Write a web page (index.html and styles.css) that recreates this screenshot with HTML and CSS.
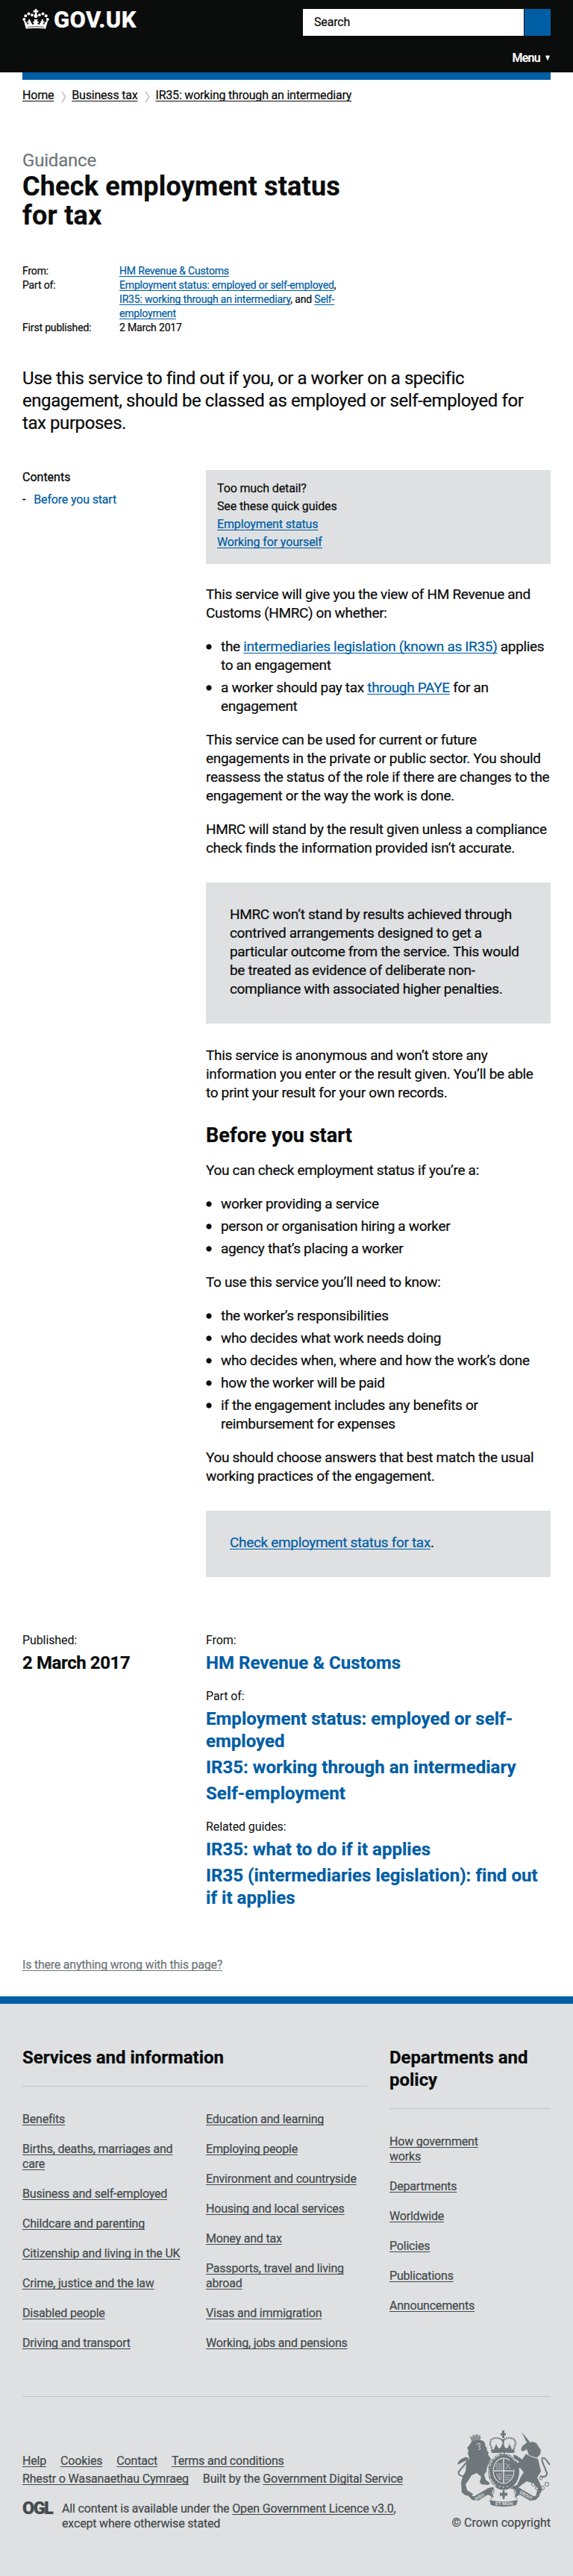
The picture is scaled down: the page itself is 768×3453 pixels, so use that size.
FILE: index.html
```html
<!DOCTYPE html>
<html lang="en">
<head>
<meta charset="utf-8">
<title>Check employment status for tax - GOV.UK</title>
<link rel="stylesheet" href="styles.css">
</head>
<body>
<header class="header">
  <div class="header-inner">
    <a class="logo" href="#">
      <svg class="crown" width="36" height="27" viewBox="0 0 36 27" fill="#fff">
        <path d="M16.6 0h2.8l-.4 2.2 2.4-.4v3l-2.4-.5.5 3.2c1.3.8 1.6 2.300.5 3.400L19 12h-2l-1-1.100c-1.100-1.100-.8-2.600.5-3.400l.5-3.200-2.400.5v-3l2.400.4z"/>
        <circle cx="13" cy="8.100" r="1.900"/><circle cx="8.500" cy="6.500" r="2"/><circle cx="4.300" cy="9.200" r="2"/><circle cx="2.300" cy="14" r="2"/>
        <circle cx="23" cy="8.100" r="1.900"/><circle cx="27.500" cy="6.500" r="2"/><circle cx="31.700" cy="9.200" r="2"/><circle cx="33.700" cy="14" r="2"/>
        <path d="M1.800 15.500l2.600 1.200c1.500 1.600 2.500 3.500 3 4.600l1.200-3-2 .4v-2.400l2 .3-.7-2.600h2.600l-.6 2.600 1.700-.3v2.300c1 .8 1.600 1.300 1.400 2.500 1.800-.4 2.800-1.200 3.200-2.400l-1.900.4v-2.500l1.900.4L15.600 14h4.800l-.6 3 1.900-.4v2.500l-1.900-.4c.4 1.200 1.400 2 3.200 2.400-.2-1.200.4-1.700 1.400-2.500v-2.300l1.700.3-.6-2.600h2.600l-.7 2.600 2-.3v2.400l-2-.4 1.200 3c.5-1.100 1.500-3 3-4.600l2.600-1.200L31.200 26.500c-8-1-18.400-1-26.400 0z"/>
        <path d="M7 24.300q11-1.500 22 0" stroke="#0b0c0c" stroke-width=".7" fill="none"/>
      </svg>
      <span class="logo-text">GOV.UK</span>
    </a>
    <div class="header-tools">
      <form class="search">
        <span class="search-field">Search</span>
        <span class="search-button"></span>
      </form>
      <a class="menu" href="#">Menu <svg width="6" height="8" viewBox="0 0 6 8"><path d="M0 .5h6L3 7.500z" fill="#fff"/></svg></a>
    </div>
  </div>
</header>
<div class="page">
  <div class="bar"></div>
  <nav class="crumbs">
    <a href="#">Home</a>
    <svg width="7" height="16" viewBox="0 0 7 16"><path d="M.8.8l5 7.200-5 7.200" fill="none" stroke="#bfc1c3" stroke-width="1.500"/></svg>
    <a href="#">Business tax</a>
    <svg width="7" height="16" viewBox="0 0 7 16"><path d="M.8.8l5 7.200-5 7.200" fill="none" stroke="#bfc1c3" stroke-width="1.500"/></svg>
    <a href="#">IR35: working through an intermediary</a>
  </nav>
  <p class="kicker">Guidance</p>
  <h1>Check employment status<br>for tax</h1>
  <dl class="meta">
    <dt>From:</dt><dd><a href="#">HM Revenue &amp; Customs</a></dd>
    <dt>Part of:</dt><dd><a href="#">Employment status: employed or self-employed</a>,<br><a href="#">IR35: working through an intermediary</a>, and <a href="#">Self-<br>employment</a></dd>
    <dt>First published:</dt><dd>2 March 2017</dd>
  </dl>
  <p class="lead">Use this service to find out if you, or a worker on a specific<br>engagement, should be classed as employed or self-employed for<br>tax purposes.</p>
  <div class="columns">
    <aside class="contents">
      <h2>Contents</h2>
      <ul><li><a href="#">Before you start</a></li></ul>
    </aside>
    <main class="body">
      <div class="guides">
        <p>Too much detail?</p>
        <p>See these quick guides</p>
        <p><a href="#">Employment status</a></p>
        <p><a href="#">Working for yourself</a></p>
      </div>
      <p>This service will give you the view of HM Revenue and<br>Customs (HMRC) on whether:</p>
      <ul>
        <li>the <a href="#">intermediaries legislation (known as IR35)</a> applies<br>to an engagement</li>
        <li>a worker should pay tax <a href="#">through PAYE</a> for an<br>engagement</li>
      </ul>
      <p>This service can be used for current or future<br>engagements in the private or public sector. You should<br>reassess the status of the role if there are changes to the<br>engagement or the way the work is done.</p>
      <p>HMRC will stand by the result given unless a compliance<br>check finds the information provided isn’t accurate.</p>
      <div class="callout">HMRC won’t stand by results achieved through<br>contrived arrangements designed to get a<br>particular outcome from the service. This would<br>be treated as evidence of deliberate non-<br>compliance with associated higher penalties.</div>
      <p>This service is anonymous and won’t store any<br>information you enter or the result given. You’ll be able<br>to print your result for your own records.</p>
      <h2>Before you start</h2>
      <p>You can check employment status if you’re a:</p>
      <ul>
        <li>worker providing a service</li>
        <li>person or organisation hiring a worker</li>
        <li>agency that’s placing a worker</li>
      </ul>
      <p>To use this service you’ll need to know:</p>
      <ul>
        <li>the worker’s responsibilities</li>
        <li>who decides what work needs doing</li>
        <li>who decides when, where and how the work’s done</li>
        <li>how the worker will be paid</li>
        <li>if the engagement includes any benefits or<br>reimbursement for expenses</li>
      </ul>
      <p>You should choose answers that best match the usual<br>working practices of the engagement.</p>
      <div class="callout callout-last"><a href="#">Check employment status for tax</a>.</div>
    </main>
  </div>
  <div class="columns details">
    <dl>
      <dt>Published:</dt><dd class="date">2 March 2017</dd>
    </dl>
    <dl>
      <dt>From:</dt><dd><a href="#">HM Revenue &amp; Customs</a></dd>
      <dt>Part of:</dt>
      <dd><a href="#">Employment status: employed or self-<br>employed</a></dd>
      <dd><a href="#">IR35: working through an intermediary</a></dd>
      <dd><a href="#">Self-employment</a></dd>
      <dt>Related guides:</dt>
      <dd><a href="#">IR35: what to do if it applies</a></dd>
      <dd><a href="#">IR35 (intermediaries legislation): find out<br>if it applies</a></dd>
    </dl>
  </div>
  <p class="report"><a href="#">Is there anything wrong with this page?</a></p>
</div>
<footer class="footer">
  <div class="footer-inner">
    <div class="footer-nav">
      <section class="services">
        <h2>Services and information</h2>
        <div class="lists">
          <ul>
            <li><a href="#">Benefits</a></li>
            <li><a href="#">Births, deaths, marriages and<br>care</a></li>
            <li><a href="#">Business and self-employed</a></li>
            <li><a href="#">Childcare and parenting</a></li>
            <li><a href="#">Citizenship and living in the UK</a></li>
            <li><a href="#">Crime, justice and the law</a></li>
            <li><a href="#">Disabled people</a></li>
            <li><a href="#">Driving and transport</a></li>
          </ul>
          <ul>
            <li><a href="#">Education and learning</a></li>
            <li><a href="#">Employing people</a></li>
            <li><a href="#">Environment and countryside</a></li>
            <li><a href="#">Housing and local services</a></li>
            <li><a href="#">Money and tax</a></li>
            <li><a href="#">Passports, travel and living<br>abroad</a></li>
            <li><a href="#">Visas and immigration</a></li>
            <li><a href="#">Working, jobs and pensions</a></li>
          </ul>
        </div>
      </section>
      <section class="departments">
        <h2>Departments and<br>policy</h2>
        <ul>
          <li><a href="#">How government<br>works</a></li>
          <li><a href="#">Departments</a></li>
          <li><a href="#">Worldwide</a></li>
          <li><a href="#">Policies</a></li>
          <li><a href="#">Publications</a></li>
          <li><a href="#">Announcements</a></li>
        </ul>
      </section>
    </div>
    <div class="footer-meta">
      <div class="support">
        <div class="support-row"><a href="#">Help</a><a href="#">Cookies</a><a href="#">Contact</a><a href="#">Terms and conditions</a></div>
        <div class="support-row"><a href="#">Rhestr o Wasanaethau Cymraeg</a><span>Built by the <a href="#">Government Digital Service</a></span></div>
        <div class="licence">
          <span class="ogl">OGL</span>
          <p>All content is available under the <a href="#">Open Government Licence v3.0</a>,<br>except where otherwise stated</p>
        </div>
      </div>
      <div class="copyright">
        <svg width="125" height="102" viewBox="0 0 125 102" fill="#6f777b">
          <!-- lion -->
          <path d="M17 7l3 2 1-4 3 2 2-3 2 3 3-2-1 4 2-1-2 7H19z" fill="#8b9295"/>
          <path d="M19 15q8-4 16-1l3 5-1 1 3 4-1 1 3 5-1 2 4 6 3 5-1 3-7 2-1 7-3 4 2 7 6 5-3 2-9-1-2-3 2-7-6-5-7 3-5 8-3 4 2 8 8 5-2 3-8-1-5-4-1-13 2-8 4-7 1-10 4-8-2-7 1-3-2-4 2-2z"/>
          <path d="M26 19l3-2 2 2-2 2 2 3-3 2" fill="none" stroke="#dee0e2" stroke-width="1"/>
          <path d="M12 61Q0 62 2 55l10-12Q17 34 8 38L1 45M14 39Q6 35 1 45" fill="none" stroke="#6f777b" stroke-width="2"/>
          <path d="M1 45q5-9 13-6l-8 4z"/>
          <!-- crown -->
          <path d="M60 6l-2 1V3l2 1V0h3v4l2-1v4l-2-1v4h-3z"/>
          <path d="M47 27L44 18q0-8 8-8 7 0 9 5 2-5 9-5 8 0 8 8l-3 9" fill="none" stroke="#6f777b" stroke-width="2.200" stroke-dasharray="2 .8"/>
          <path d="M60.500 11h2v13h-2zM46 30l-1-4q16-4 32 0l-1 4zM49 25l3-7 3 6 3-1 3-7 3 7 3 1 3-6 3 7z"/>
          <!-- garter and shield -->
          <ellipse cx="62" cy="55" rx="21" ry="24.500"/>
          <ellipse cx="62" cy="54" rx="14.500" ry="17.500" fill="#dee0e2"/>
          <ellipse cx="62" cy="54" rx="13.300" ry="16.300"/>
          <path d="M62 38v32M49 54h26" stroke="#dee0e2" stroke-width="1.500"/>
          <path d="M52 45h8M51 48h9M52 51h8M64 63h8M64 60h9M64 66h6M65 44l6 7M71 44l-6 7M53 58q1 7 5 8M56 57v8M59 57l-1 9" stroke="#dee0e2" stroke-width="1" stroke-dasharray="2.500 .8" fill="none"/>
          <path id="garter" d="M52.500 73A18.500 21.500 0 1 1 71.500 73" fill="none"/>
          <text class="motto garter"><textPath href="#garter">HONI SOIT QUI MAL Y PENSE</textPath></text>
          <path d="M56 75h1.500M61 76h1.500M66 75h1.500" stroke="#dee0e2" stroke-width="1.500"/>
          <!-- unicorn -->
          <path d="M86 2l11 13-3 3z"/>
          <path d="M96 16l5-1 5 2 3 5 3 4-1 6-5 5-10-4-3-8-5 3-3-2 2-5 5-4z"/>
          <path d="M92 31q8 5 16 7l2 8 2 9-5 8 3 6 4 10-5 9-4-1 3-9-6-7-9-3-7 5-7 6-8-1 3-3 6-2 4-9 5-8-5-6-6 1-5 3-1-7-3-3 1-4 5 1 2 5 6-4-7-5-1-5 5 2 7 5z"/>
          <path d="M91 30q8 6 17 7" stroke="#dee0e2" stroke-width="1.200" stroke-dasharray="2 1" fill="none"/>
          <path d="M111 61q9 3 9-4l-6-15q-2-8 4-4l6 8" fill="none" stroke="#6f777b" stroke-width="2"/>
          <g fill="none" stroke="#6f777b"><circle cx="102" cy="72" r="2.500"/><circle cx="107" cy="77" r="2.500"/><circle cx="114" cy="77" r="2.500"/><circle cx="120" cy="72" r="2.700"/><circle cx="109" cy="52" r="2"/><circle cx="112" cy="64" r="2"/></g>
          <!-- scroll -->
          <path d="M14 87l9 1 17-10 9-2-3 8 3 6-8-4-13 8-8-1zM111 87l-9 1-17-10-9-2 3 8-3 6 8-4 13 8 8-1zM43 93q19 5 38 0l-2 7q-17 4-34 0z"/>
          <path d="M40 78q10-4 9 3l-4 11M85 78q-10-4-9 3l4 11" stroke="#6f777b" fill="none"/>
          <path d="M61 80h2l1 4 3-1v5l-3-1-1 5h-2l-1-5-3 1v-5l3 1z"/>
          <text class="motto" transform="translate(25 94) rotate(-30)">DIEU</text>
          <text class="motto" x="51" y="100">ET MON</text>
          <text class="motto" transform="translate(83 84) rotate(30)">DROIT</text>
        </svg>
        <a href="#">© Crown copyright</a>
      </div>
    </div>
  </div>
</footer>
</body>
</html>
```
FILE: styles.css
```css
* { box-sizing: border-box; margin: 0; padding: 0; }
body {
  font-family: Roboto, "Liberation Sans", sans-serif;
  font-size: 16px;
  line-height: 20px;
  letter-spacing: -0.17px;
  -webkit-text-stroke: 0.22px currentcolor;
  color: #0b0c0c;
  background: #fff;
}
ul { list-style: none; }
a { color: #005ea5; text-underline-offset: 2px; text-decoration-thickness: 1px; text-decoration-skip-ink: none; }

.header { height: 97px; background: #0b0c0c; }
.header-inner { display: flex; justify-content: space-between; padding: 12px 30px 0; }
.logo { display: flex; gap: 6px; color: #fff; text-decoration: none; }
.logo-text { font-size: 31px; font-weight: 800; line-height: 30px; letter-spacing: 0.35px; }
.header-tools { display: flex; flex-direction: column; align-items: flex-end; }
.search { display: flex; gap: 1px; width: 332px; height: 36px; }
.search-field { flex: 1; background: #fff; padding-left: 15px; line-height: 36px; }
.search-button { width: 35px; background: #005ea5; }
.menu { display: flex; align-items: center; gap: 7px; margin-top: 20px; color: #fff; font-weight: 500; letter-spacing: -0.7px; text-decoration: none; }
.menu svg { margin-right: 1px; }

.page { padding: 0 30px; }
.bar { height: 10px; background: #005ea5; }
.crumbs { display: flex; align-items: center; padding-top: 11px; gap: 8px; letter-spacing: -0.2px; }
.crumbs a { color: #0b0c0c; }
.crumbs svg { margin: 3px -1px 0 2px; }
.kicker { margin-top: 62px; font-size: 24px; line-height: 30px; letter-spacing: -0.2px; color: #6f777b; }
h1 { margin-top: 1px; font-size: 36px; line-height: 39px; letter-spacing: 0.2px; }
.meta { display: grid; grid-template-columns: 130px 1fr; margin-top: 45px; font-size: 14px; line-height: 19px; letter-spacing: -0.17px; }
.lead { margin-top: 43px; font-size: 24px; line-height: 30px; letter-spacing: -0.43px; }

.columns { display: grid; grid-template-columns: 246px 462px; margin-top: 48px; }
.contents h2 { font-size: 16px; line-height: 20px; font-weight: 400; letter-spacing: 0; -webkit-text-stroke-width: 0.35px; }
.contents li { display: flex; gap: 11px; margin-top: 10px; }
.contents li::before { content: "-"; }
.contents a { text-decoration: none; }

.body { font-size: 19px; line-height: 25px; letter-spacing: -0.33px; }
.guides { padding: 13px 15px 17px; margin-bottom: 28px; font-size: 16px; line-height: 24px; letter-spacing: -0.13px; background: #dee0e2; }
.guides p { margin: 0; }
.body p + ul, .body ul + p, .body p + p { margin-top: 20px; }
.body .guides p + p { margin-top: 0; }
.body li { display: flow-root; padding-left: 20px; background: radial-gradient(circle at 4px 13px, #0b0c0c 3.200px, transparent 4px); }
.body li + li { margin-top: 5px; }
.callout { margin: 34px 0 30px; padding: 30px 32px 34px; background: #dee0e2; }
.callout-last { margin-bottom: 0; }
.body h2 { margin: 30px 0 19px; font-size: 27px; line-height: 30px; letter-spacing: 0.05px; }

.details { margin-top: 75px; }
.details dt { margin-bottom: 5px; letter-spacing: -0.1px; -webkit-text-stroke-width: 0; }
.details dd { margin-bottom: 5px; font-size: 24px; line-height: 30px; font-weight: 700; letter-spacing: 0.03px; }
.details .date { letter-spacing: -0.4px; }
.details dd + dt { margin-top: 20px; }
.details a { text-decoration: none; }
.report { margin-top: 60px; letter-spacing: -0.22px; }
.report a { color: #6f777b; }

.footer { margin-top: 32px; height: 777px; border-top: 10px solid #005ea5; background: #dee0e2; color: #454a4c; }
.footer a { color: #454a4c; }
.footer-inner { padding: 57px 30px 0; }
.footer-nav { display: grid; grid-template-columns: 462px 216px; gap: 30px; height: 470px; border-bottom: 1px solid #bfc1c3; }
.footer h2 { padding-bottom: 23px; border-bottom: 1px solid #bfc1c3; color: #0b0c0c; font-size: 24px; line-height: 30px; letter-spacing: -0.03px; }
.lists { display: grid; grid-template-columns: 246px 1fr; }
.footer ul { padding-top: 34px; letter-spacing: -0.2px; }
.footer li { margin-bottom: 20px; }
.footer-meta { display: flex; justify-content: space-between; margin-top: 45px; }
.support { padding-top: 29px; }
.support-row { display: flex; gap: 19px; line-height: 24px; }
.licence { display: flex; margin-top: 18px; gap: 12px; }
.ogl { width: 41px; font-size: 23.500px; font-weight: 900; letter-spacing: -1.600px; line-height: 18px; }
.copyright { display: flex; flex-direction: column; align-items: flex-end; gap: 12px; }
.copyright a { text-decoration: none; letter-spacing: 0; }
.motto { fill: #dee0e2; font-size: 6px; font-weight: 700; letter-spacing: 0.2px; -webkit-text-stroke-width: 0; }
.garter { font-size: 5.500px; letter-spacing: -0.1px; }
```
